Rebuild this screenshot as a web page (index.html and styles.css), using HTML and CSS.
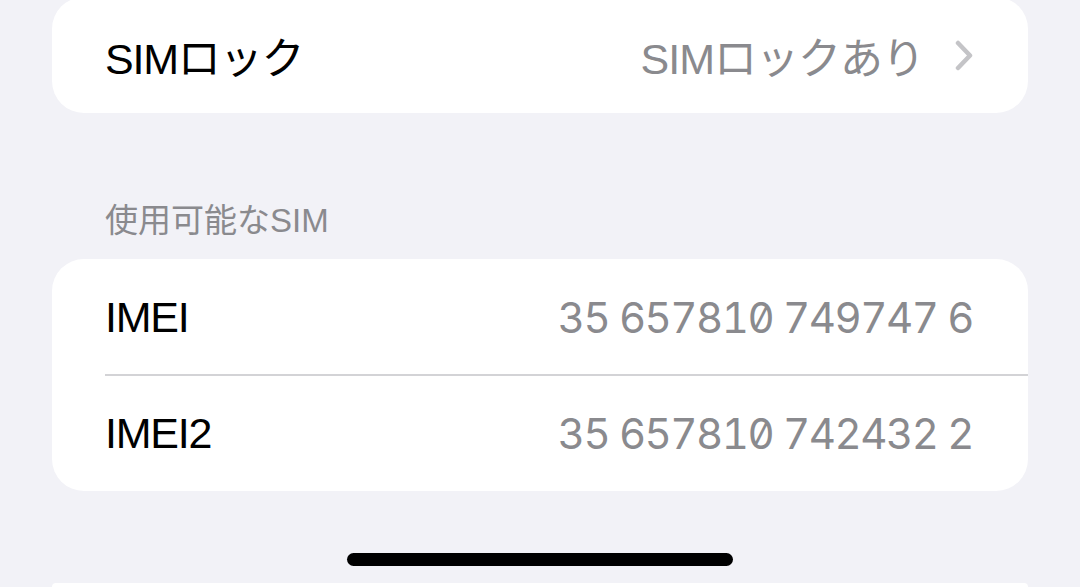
FILE: index.html
```html
<!DOCTYPE html>
<html lang="ja">
<head>
  <meta charset="UTF-8" />
  <meta name="viewport" content="width=device-width, initial-scale=1.0"/>
  <title>SIM</title>
  <link rel="stylesheet" href="styles.css">
</head>
<body>
  <div class="screen">
    <div class="group group-top">
      <div class="row">
        <span class="label">SIMロック</span>
        <span class="detail">
          <span class="value">SIMロックあり</span>
          <svg class="chevron" width="18" height="31" viewBox="0 0 18 31">
            <polyline points="3,3 15,15.5 3,28" fill="none" stroke="#c4c4c7" stroke-width="4.5" stroke-linecap="round" stroke-linejoin="round"/>
          </svg>
        </span>
      </div>
    </div>

    <div class="section-header">使用可能なSIM</div>

    <div class="group">
      <div class="row">
        <span class="label">IMEI</span>
        <span class="value number">35 657810 749747 6</span>
      </div>
      <div class="row">
        <span class="label">IMEI2</span>
        <span class="value number">35 657810 742432 2</span>
      </div>
    </div>

    <div class="group group-next"></div>
  </div>

  <div class="home-indicator"></div>
</body>
</html>
```

FILE: styles.css
```css
* {
  box-sizing: border-box;
}
html, body {
  height: 100%;
}
body {
  margin: 0;
  background: #f2f2f7;
  font-family: "Liberation Sans", "Noto Sans CJK JP", sans-serif;
  color: #000;
  overflow: hidden;
}

.screen {
  padding: 0 52px;
}

.group {
  background: #fff;
  border-radius: 32px;
}

.group-top {
  margin-top: -3px;
}

.group-next {
  margin-top: 92px;
  height: 4px;
  border-radius: 32px 32px 0 0;
}

.row {
  display: flex;
  align-items: center;
  justify-content: space-between;
  height: 116px;
  padding: 0 55px 0 53px;
  position: relative;
}

.row + .row::before {
  content: "";
  position: absolute;
  top: -1px;
  left: 53px;
  right: 0;
  height: 2px;
  background: #d3d3d6;
}

.label {
  font-size: 43px;
  letter-spacing: -1.2px;
}

.detail {
  display: flex;
  align-items: center;
  gap: 31px;
}

.value {
  font-size: 43px;
  letter-spacing: -1px;
  color: #8a8a8e;
}

.number {
  font-family: "Inter", "Liberation Sans", sans-serif;
  font-size: 42px;
  letter-spacing: -1.5px;
  font-feature-settings: "tnum", "zero";
}

.chevron {
  display: block;
}

.section-header {
  margin: 88px 0 18px;
  padding-left: 53px;
  font-size: 33px;
  line-height: 40px;
  color: #8a8a8e;
}

.home-indicator {
  position: absolute;
  left: 347px;
  top: 553px;
  width: 386px;
  height: 13px;
  border-radius: 7px;
  background: #000;
}
```
